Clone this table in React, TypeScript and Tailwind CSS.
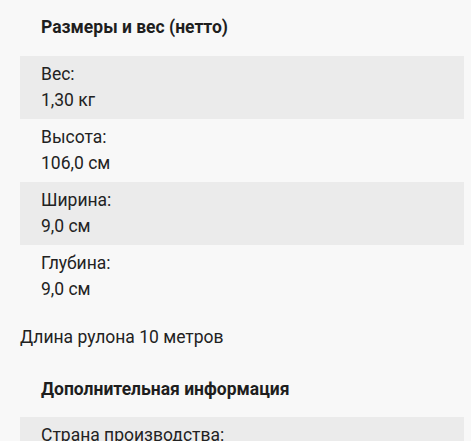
import React from 'react';

type Spec = { label: string; value: string };

const dims: Spec[] = [
  { label: 'Вес:', value: '1,30 кг' },
  { label: 'Высота:', value: '106,0 см' },
  { label: 'Ширина:', value: '9,0 см' },
  { label: 'Глубина:', value: '9,0 см' },
];

const extra: Spec[] = [{ label: 'Страна производства:', value: 'Россия' }];

function SpecRows({ items }: { items: Spec[] }) {
  return (
    <div className="flex flex-col">
      {items.map((item, i) => (
        <div
          key={item.label}
          className={`px-[21px] pt-[5px] pb-[6px] text-[17.5px] leading-[26px] text-[#222] ${
            i % 2 === 0 ? 'bg-[#ebebeb]' : ''
          }`}
        >
          <div>{item.label}</div>
          <div>{item.value}</div>
        </div>
      ))}
    </div>
  );
}

export default function App() {
  return (
    <div
      className="min-h-screen bg-[#f8f8f8] px-[20px] pr-[7px] pt-[15px]"
      style={{ fontFamily: 'Roboto, "Noto Sans", sans-serif' }}
    >
      <h2 className="px-[21px] text-[17.5px] leading-[24px] font-bold text-[#1e1e1e]">
        Размеры и вес (нетто)
      </h2>
      <div className="mt-[17px]">
        <SpecRows items={dims} />
      </div>
      <p className="mt-[17px] text-[17.5px] leading-[24px] text-[#222]">Длина рулона 10 метров</p>
      <h2 className="mt-[28px] px-[21px] text-[17.5px] leading-[24px] font-bold text-[#1e1e1e]">
        Дополнительная информация
      </h2>
      <div className="mt-[16px]">
        <SpecRows items={extra} />
      </div>
    </div>
  );
}
